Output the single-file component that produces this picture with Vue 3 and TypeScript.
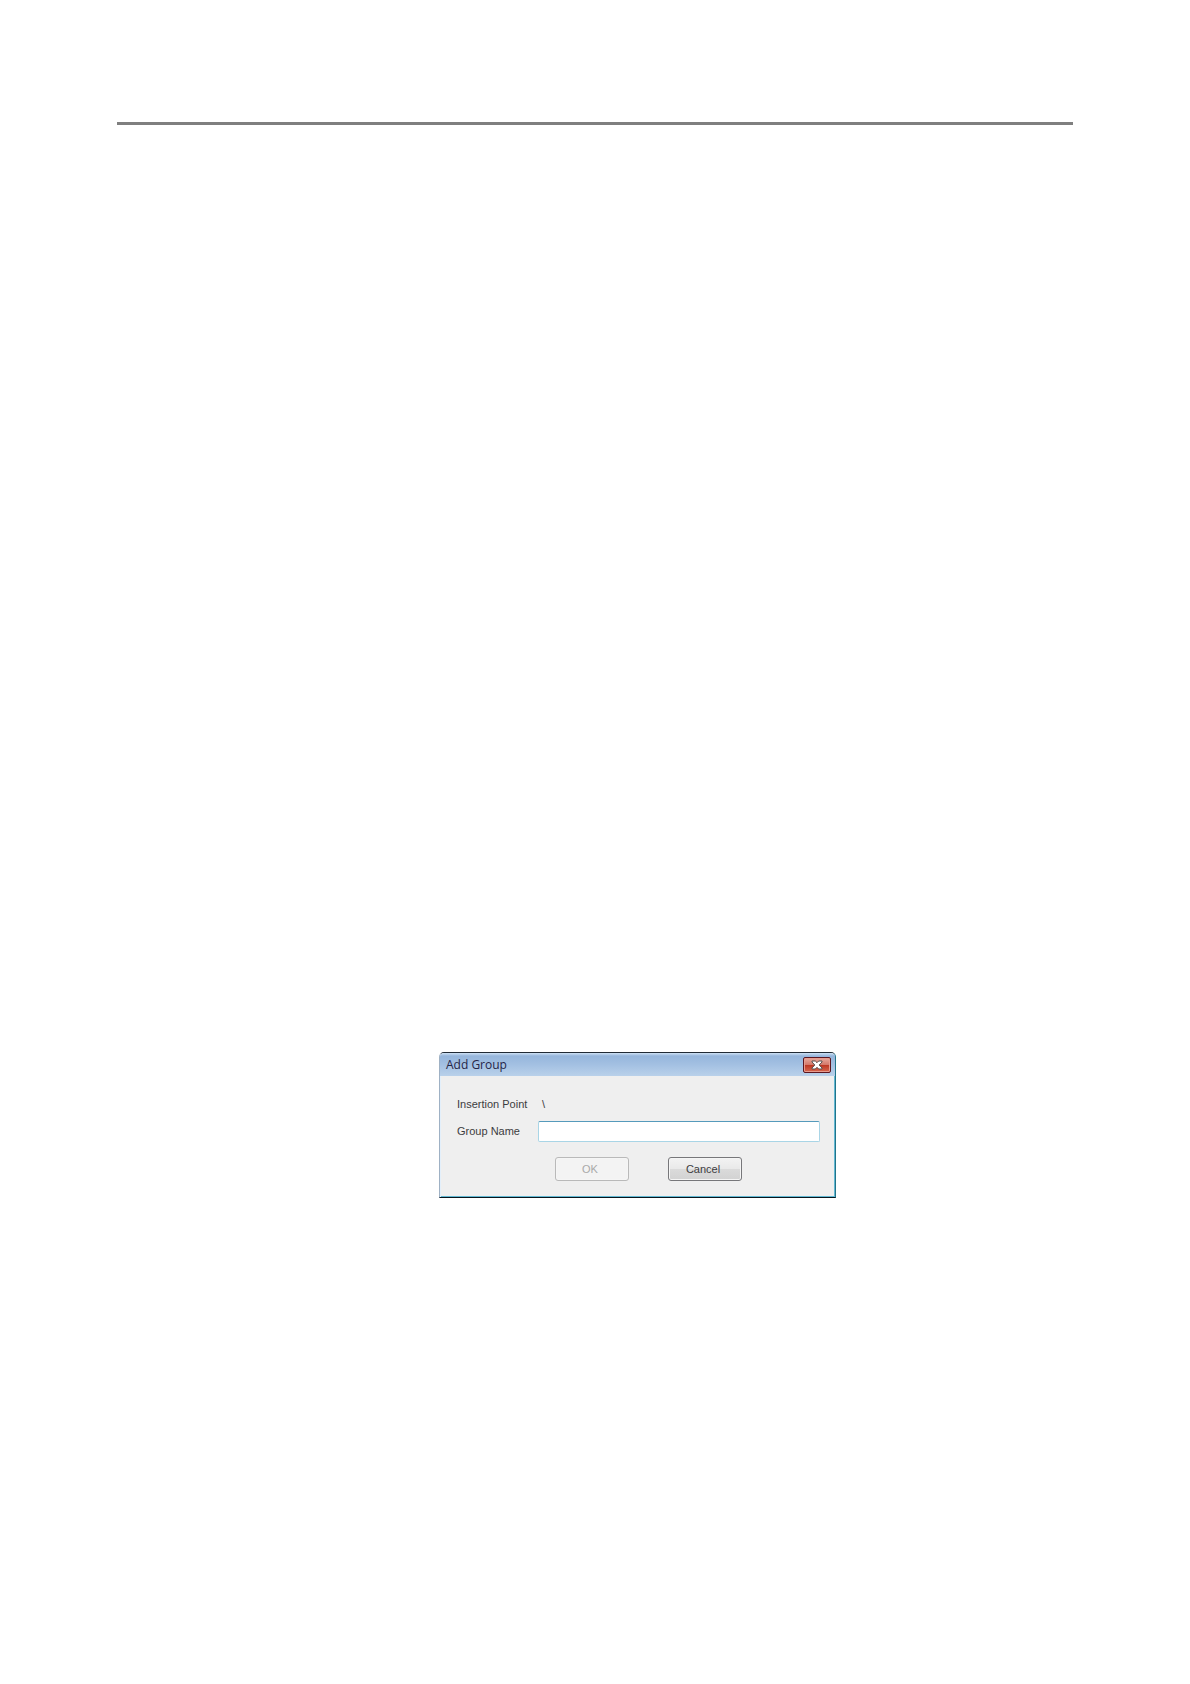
<script setup lang="ts">
import { ref } from 'vue'

const insertionPoint = '\\'
const groupName = ref('')
</script>

<template>
  <main class="page">
    <hr class="rule" />
    <section class="content">
      <form class="dialog" role="dialog" aria-labelledby="dialog-title" @submit.prevent>
        <header class="titlebar">
          <h1 id="dialog-title" class="title">Add Group</h1>
          <button class="close" type="button" aria-label="Close">
            <svg width="12" height="10" viewBox="0 0 12 10" aria-hidden="true">
              <path
                d="M1 1h3.3L6 2.7 7.7 1H11v1L8.2 5 11 8v1H7.7L6 7.3 4.3 9H1V8l2.8-3L1 2z"
                fill="#fff"
                stroke="#59514f"
                stroke-width="1"
              />
            </svg>
          </button>
        </header>
        <div class="body">
          <div class="fields">
            <label for="insertion-point">Insertion Point</label>
            <output id="insertion-point" class="point">{{ insertionPoint }}</output>
            <label for="group-name">Group Name</label>
            <input id="group-name" v-model="groupName" class="input" type="text" autocomplete="off" />
          </div>
          <div class="actions">
            <button class="button" type="submit" :disabled="!groupName">OK</button>
            <button class="button" type="button">Cancel</button>
          </div>
        </div>
      </form>
    </section>
  </main>
</template>

<style>
body {
  margin: 0;
  background: #fff;
}
</style>

<style scoped>
.page {
  box-sizing: border-box;
  min-height: 100vh;
  padding: 122px 117px 0;
  font-family: "Liberation Sans", Arial, sans-serif;
  font-size: 11px;
  color: #3c3c40;
}

.rule {
  height: 3px;
  margin: 0;
  border: 0;
  background: #7f7f7f;
}

.content {
  display: flex;
  justify-content: center;
  padding: 927px 0 60px 85px;
}

.dialog {
  box-sizing: border-box;
  width: 100%;
  max-width: 397px;
  border: 1px solid;
  border-color: #202a35 #23748a #06151e #9fb1c4;
  border-radius: 5px 5px 0 0;
  background: #efefef;
  box-shadow: inset 1px 0 #e3effa, inset -1px -1px #62b8d2;
}

.titlebar {
  box-sizing: border-box;
  display: flex;
  align-items: center;
  justify-content: space-between;
  height: 23px;
  padding: 1px 4px 0 6px;
  border-radius: 4px 4px 0 0;
  background: linear-gradient(#cfe2f5 0, #96b6dc 3px, #a3c0e2 50%, #b9d1ea);
}

.title {
  margin: 0;
  font: 400 12px/20px "Open Sans", sans-serif;
  color: #252547;
}

.close {
  box-sizing: border-box;
  display: flex;
  align-items: center;
  justify-content: center;
  width: 28px;
  height: 16px;
  padding: 0;
  border: 1px solid #5d1720;
  border-radius: 2px;
  background: linear-gradient(#e8aa9e, #d47869 48%, #bd3823 52%, #d76750);
  box-shadow: inset 0 0 0 1px #e79b8e;
}

.body {
  padding: 18px 15px 16px 17px;
}

.fields {
  display: grid;
  grid-template-columns: 81px 1fr;
  row-gap: 6px;
  align-items: center;
  line-height: 21px;
  white-space: nowrap;
}

.point {
  padding-left: 4px;
}

.input {
  box-sizing: border-box;
  width: 100%;
  height: 21px;
  padding: 0 4px;
  border: 1px solid #a9d5e6;
  border-top-color: #559abb;
  border-radius: 2px;
  outline: 0;
  background: #fff;
  font: inherit;
  color: inherit;
}

.actions {
  display: flex;
  gap: 39px;
  justify-content: center;
  padding: 15px 0 0 20px;
}

.button {
  box-sizing: border-box;
  width: 74px;
  height: 24px;
  padding: 0 4px 0 0;
  border: 1px solid #77777a;
  border-radius: 3px;
  background: linear-gradient(#f3f3f3, #e9e9e9 48%, #dadada 52%, #d2d2d2);
  box-shadow: inset 0 0 0 1px #f5f5f5;
  font: inherit;
  color: #3c3c40;
}

.button:disabled {
  border-color: #b9b9b9;
  background: #f3f3f3;
  color: #a9a9a9;
}
</style>
